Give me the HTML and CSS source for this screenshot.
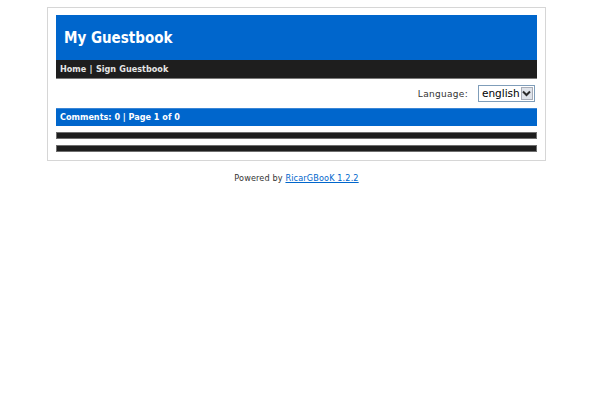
FILE: index.html
```html
<!DOCTYPE html>
<html>
<head>
<meta charset="utf-8">
<title>My Guestbook</title>
<link rel="stylesheet" href="styles.css">
</head>
<body>
<div class="wrap">
  <div class="box">
    <div class="header">My Guestbook</div>
    <div class="nav"><span>Home</span> | <span>Sign Guestbook</span></div>
    <div class="langrow">
      <span class="langlabel">Language:</span>
      <span class="select">
        <span class="selval">english</span>
        <span class="selbtn"><svg width="9" height="7" viewBox="0 0 9 7"><path d="M1 1.5 L4.5 5 L8 1.5" fill="none" stroke="#2b2b2b" stroke-width="2"/></svg></span>
      </span>
    </div>
    <div class="infobar">Comments: 0 | Page 1 of 0</div>
    <div class="darkbar"></div>
    <div class="darkbar second"></div>
  </div>
  <div class="footer">Powered by <a href="#">RicarGBooK 1.2.2</a></div>
</div>
</body>
</html>
```
FILE: styles.css
```css
html, body {
  margin: 0;
  padding: 0;
  background: #ffffff;
}
body {
  font-family: "DejaVu Sans Condensed", "DejaVu Sans", Verdana, sans-serif;
}
.wrap {
  width: 499px;
  margin: 7px 0 0 47px;
}
.box {
  border: 1px solid #d6d6d6;
  padding: 7px 8px 8px 8px;
}
.header {
  background: #0066cc;
  color: #ffffff;
  height: 45px;
  line-height: 46px;
  padding-left: 8px;
  font-size: 15px;
  font-weight: bold;
}
.nav {
  background: #1e1e1e;
  border-bottom: 1px solid #7a7a7a;
  height: 18px;
  line-height: 19px;
  padding-left: 4px;
  color: #e6e6e6;
  font-size: 9px;
  font-weight: bold;
  word-spacing: 0.5px;
}
.langrow {
  display: flex;
  justify-content: flex-end;
  align-items: center;
  height: 29px;
  padding-right: 2px;
}
.langlabel {
  font-family: "DejaVu Sans", Verdana, sans-serif;
  font-size: 9px;
  letter-spacing: 0.3px;
  color: #333333;
  margin-right: 10px;
}
.select {
  display: flex;
  align-items: stretch;
  height: 15px;
  border: 1px solid #7f9db9;
  background: #ffffff;
  width: 55px;
}
.selval {
  flex: 1;
  font-family: "DejaVu Sans", Verdana, sans-serif;
  font-size: 10.5px;
  line-height: 15px;
  color: #000000;
  padding-left: 3px;
}
.selbtn {
  width: 13px;
  margin: 1px;
  background: #dfe3ea;
  border: 1px solid #a8adb8;
  display: flex;
  align-items: center;
  justify-content: center;
  box-sizing: border-box;
}
.infobar {
  background: #0066cc;
  border-top: 1px solid #3a86d6;
  color: #ffffff;
  height: 17px;
  line-height: 17px;
  padding-left: 4px;
  font-size: 9px;
  font-weight: bold;
}
.darkbar {
  margin-top: 6px;
  height: 5px;
  background: #1e1e1e;
  border: 1px solid #6e6e6e;
}
.darkbar.second {
  margin-top: 6px;
}
.footer {
  text-align: center;
  margin-top: 12px;
  font-family: "DejaVu Sans Condensed", "DejaVu Sans", Verdana, sans-serif;
  font-size: 9px;
  letter-spacing: 0.15px;
  color: #333333;
}
.footer a {
  color: #0066cc;
  text-decoration: underline;
}
```
